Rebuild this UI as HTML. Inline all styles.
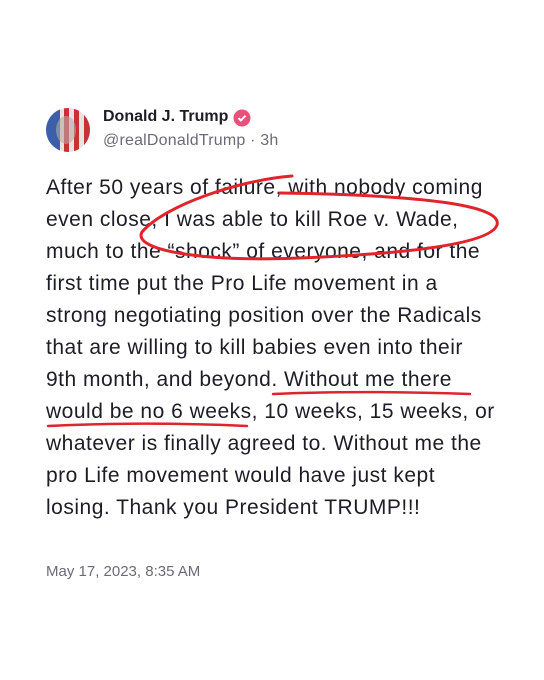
<!DOCTYPE html>
<html><head><meta charset="utf-8"><style>
html,body{margin:0;padding:0;background:#fff;width:544px;height:680px;overflow:hidden;position:relative;font-family:"Liberation Sans",sans-serif}
.l{position:absolute;left:46px;font-size:21px;color:#1d1d26;white-space:nowrap;letter-spacing:0.5px;line-height:32px}
</style></head><body>
<svg style="position:absolute;left:46px;top:108px" width="44" height="44" viewBox="0 0 44 44">
<defs><clipPath id="c"><circle cx="22" cy="22" r="22"/></clipPath></defs>
<g clip-path="url(#c)">
<rect width="44" height="44" fill="#e8e2e0"/>
<rect x="0" y="0" width="14" height="44" fill="#3b5fa8"/>
<rect x="18" y="0" width="5" height="44" fill="#c8303a"/>
<rect x="28" y="0" width="5" height="44" fill="#c8303a"/>
<rect x="38" y="0" width="6" height="44" fill="#c8303a"/>
<ellipse cx="20" cy="22" rx="10" ry="14" fill="#b9a9a4" opacity=".6"/>
</g></svg>
<div style="position:absolute;left:103px;top:108px;font-size:16px;font-weight:bold;color:#1d1d26">Donald J. Trump</div>
<svg style="position:absolute;left:233px;top:109px" width="18" height="18" viewBox="0 0 18 18"><circle cx="9" cy="9" r="8.5" fill="#e8527a"/><path d="M5.5 9.2l2.4 2.3 4.6-4.8" stroke="#fff" stroke-width="2" fill="none"/></svg>
<div style="position:absolute;left:103px;top:132px;font-size:16px;color:#6b6b78;letter-spacing:0.2px">@realDonaldTrump · 3h</div>
<div class="l" style="top:172px">After 50 years of failure, with nobody coming</div>
<div class="l" style="top:204px">even close, I was able to kill Roe v. Wade,</div>
<div class="l" style="top:236px">much to the “shock” of everyone, and for the</div>
<div class="l" style="top:268px">first time put the Pro Life movement in a</div>
<div class="l" style="top:300px">strong negotiating position over the Radicals</div>
<div class="l" style="top:332px">that are willing to kill babies even into their</div>
<div class="l" style="top:364px">9th month, and beyond. Without me there</div>
<div class="l" style="top:396px">would be no 6 weeks, 10 weeks, 15 weeks, or</div>
<div class="l" style="top:428px">whatever is finally agreed to. Without me the</div>
<div class="l" style="top:460px">pro Life movement would have just kept</div>
<div class="l" style="top:492px">losing. Thank you President TRUMP!!!</div>
<div style="position:absolute;left:46px;top:563px;font-size:15px;color:#6b6b78">May 17, 2023, 8:35 AM</div>
<svg style="position:absolute;left:0;top:0" width="544" height="680">
<path d="M292 176 C240 180 165 205 142 232 C132 250 200 262 300 258 C400 254 490 245 497 225 C503 205 420 195 280 193" stroke="#e0242c" stroke-width="3" fill="none" stroke-linecap="round"/>
<path d="M273 394 C340 391 410 392 470 394" stroke="#e0242c" stroke-width="2.5" fill="none" stroke-linecap="round"/>
<path d="M48 426 C110 423 180 423 247 426" stroke="#e0242c" stroke-width="2.5" fill="none" stroke-linecap="round"/>
</svg>
</body></html>
